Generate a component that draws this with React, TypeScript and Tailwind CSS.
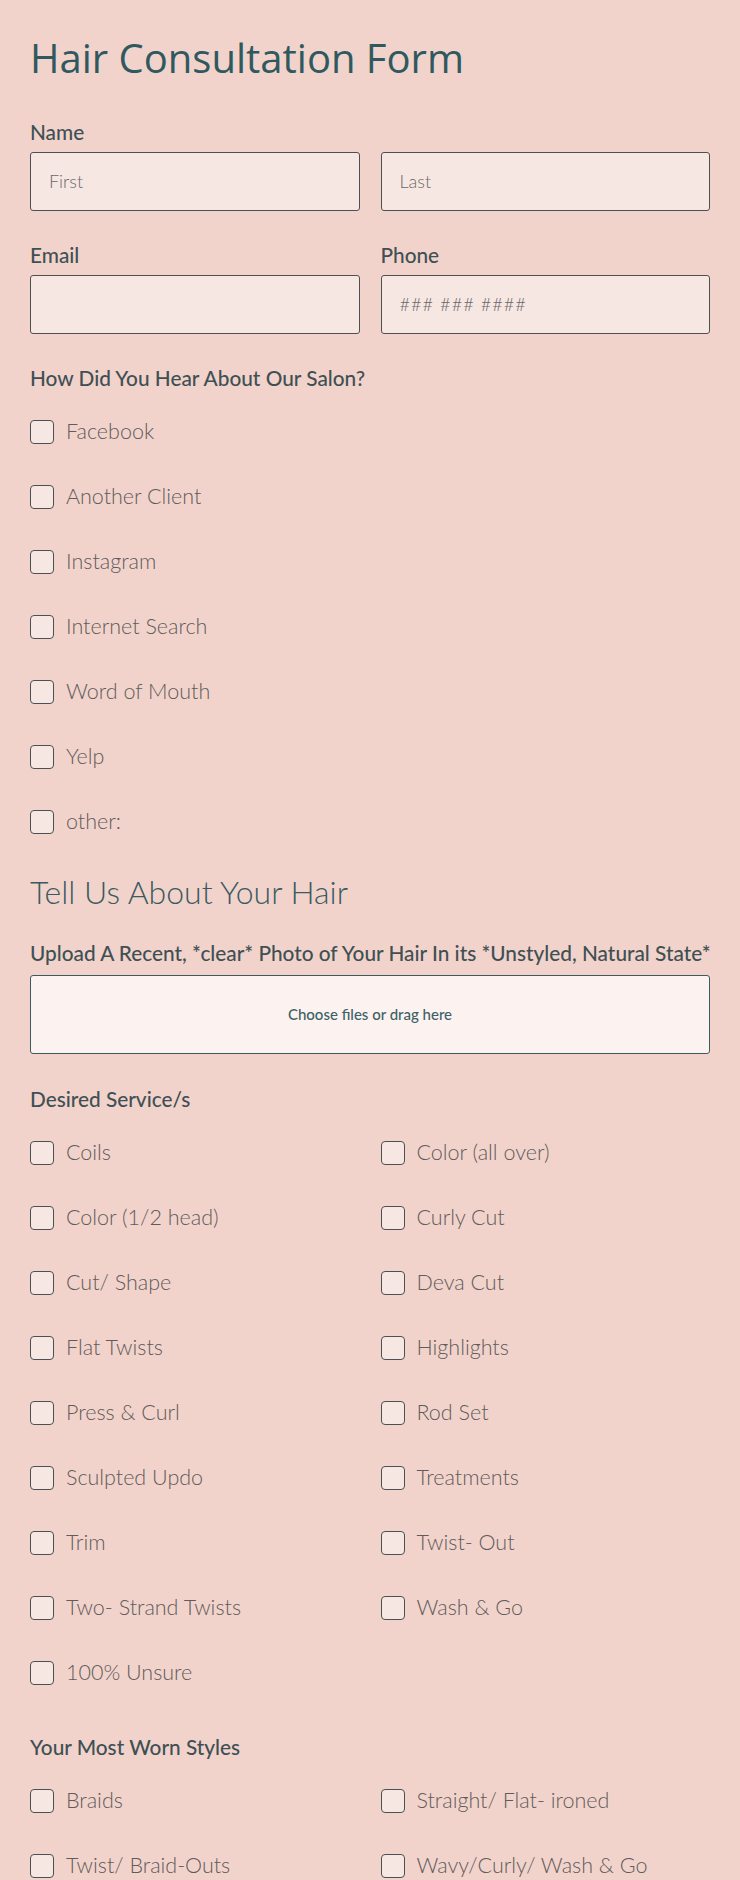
import React from "react";

const hearOptions = [
  "Facebook",
  "Another Client",
  "Instagram",
  "Internet Search",
  "Word of Mouth",
  "Yelp",
  "other:",
];

const services = [
  "Coils",
  "Color (all over)",
  "Color (1/2 head)",
  "Curly Cut",
  "Cut/ Shape",
  "Deva Cut",
  "Flat Twists",
  "Highlights",
  "Press & Curl",
  "Rod Set",
  "Sculpted Updo",
  "Treatments",
  "Trim",
  "Twist- Out",
  "Two- Strand Twists",
  "Wash & Go",
  "100% Unsure",
];

const wornStyles = [
  "Braids",
  "Straight/ Flat- ironed",
  "Twist/ Braid-Outs",
  "Wavy/Curly/ Wash & Go",
];

function FieldLabel({ children }: { children: React.ReactNode }) {
  return (
    <div className="h-6 whitespace-nowrap text-[20.8px] leading-6 font-medium text-[#3f5054]">
      {children}
    </div>
  );
}

function TextBox({ placeholder, wide }: { placeholder?: string; wide?: boolean }) {
  return (
    <div
      className={`flex h-[59px] items-center rounded-[3px] border-[1.5px] border-[#4b5152] bg-[#f7e7e3] px-[18px] text-[18px] font-light text-[#6a6867] ${
        wide ? "tracking-[1.1px]" : ""
      }`}
    >
      {placeholder}
    </div>
  );
}

function CheckRow({ label }: { label: string }) {
  return (
    <label className="flex h-[65px] items-center gap-3">
      <span className="h-6 w-6 shrink-0 rounded-[4px] border-[1.5px] border-[#4b5152] bg-[#f7e7e3]" />
      <span className="text-[21.5px] font-light text-[#5f5c5b]">{label}</span>
    </label>
  );
}

export default function App() {
  return (
    <div
      className="min-h-[1880px] bg-[#f2d3cb] px-[30px] pt-[34px]"
      style={{ fontFamily: "Lato, 'Open Sans', sans-serif" }}
    >
      <h1 className="font-['Open_Sans'] text-[40px] leading-[48px] font-normal text-[#30595f]">
        Hair Consultation Form
      </h1>

      <div className="mt-[38px]">
        <FieldLabel>Name</FieldLabel>
        <div className="mt-2 grid grid-cols-2 gap-[21px]">
          <TextBox placeholder="First" />
          <TextBox placeholder="Last" />
        </div>
      </div>

      <div className="mt-8 grid grid-cols-2 gap-[21px]">
        <div>
          <FieldLabel>Email</FieldLabel>
          <div className="mt-2">
            <TextBox />
          </div>
        </div>
        <div>
          <FieldLabel>Phone</FieldLabel>
          <div className="mt-2">
            <TextBox placeholder="### ### ####" wide />
          </div>
        </div>
      </div>

      <div className="mt-8">
        <FieldLabel>How Did You Hear About Our Salon?</FieldLabel>
        <div className="mt-[9px] flex flex-col">
          {hearOptions.map((o) => (
            <CheckRow key={o} label={o} />
          ))}
        </div>
      </div>

      <h2 className="mt-[18px] h-10 text-[32px] leading-10 font-light text-[#3b5a5f]">
        Tell Us About Your Hair
      </h2>

      <div className="mt-[29px]">
        <FieldLabel>
          Upload A Recent, *clear* Photo of Your Hair In its *Unstyled, Natural State*
        </FieldLabel>
        <div className="mt-[10px] flex h-[79px] items-center justify-center rounded-[3px] border-[1.5px] border-[#3d5a5e] bg-[#fcf3f1] text-[15px] font-medium text-[#3e6166]">
          Choose files or drag here
        </div>
      </div>

      <div className="mt-[33px]">
        <FieldLabel>Desired Service/s</FieldLabel>
        <div className="mt-[9px] grid grid-cols-2 gap-x-[21px]">
          {services.map((s) => (
            <CheckRow key={s} label={s} />
          ))}
        </div>
      </div>

      <div className="mt-[30px]">
        <FieldLabel>Your Most Worn Styles</FieldLabel>
        <div className="mt-[9px] grid grid-cols-2 gap-x-[21px]">
          {wornStyles.map((s) => (
            <CheckRow key={s} label={s} />
          ))}
        </div>
      </div>
    </div>
  );
}
